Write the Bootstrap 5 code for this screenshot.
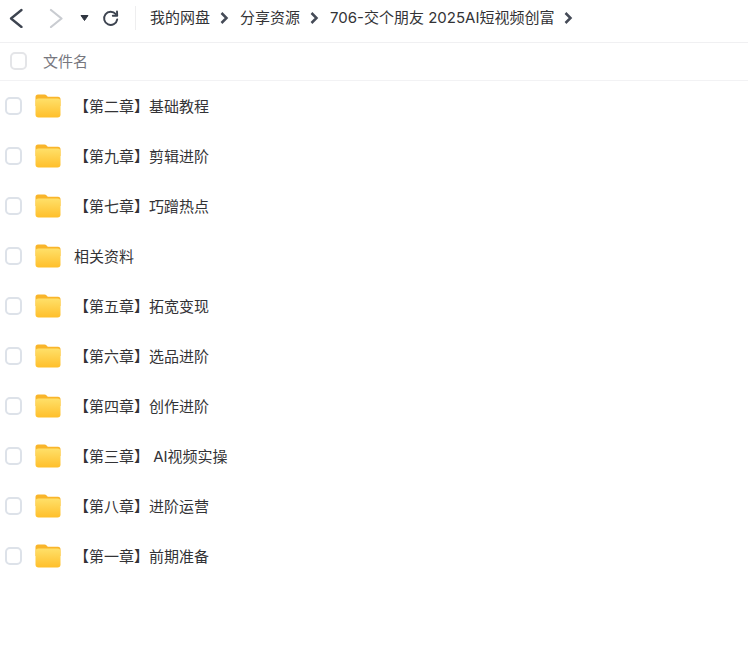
<!DOCTYPE html>
<html lang="zh-CN">
<head>
    <meta charset="UTF-8">
    <title>分享资源</title>
    <link href="https://cdn.jsdelivr.net/npm/bootstrap@5.3.0/dist/css/bootstrap.min.css" rel="stylesheet">
    <style>
        body {
            background: #fff;
            color: #333336;
            font-family: Inter, "Noto Sans CJK SC", sans-serif;
            font-size: 15px;
        }
        .top-bar {
            height: 43px;
            padding-left: 8px;
            padding-bottom: 6px;
            border-bottom: 1px solid #f0f0f2;
        }
        .bar-btn {
            display: block;
            flex: none;
        }
        .btn-forward {
            margin-left: 24px;
        }
        .btn-drop {
            margin-left: 16px;
        }
        .btn-reload {
            margin-left: 13px;
        }
        .bar-sep {
            width: 1px;
            height: 24px;
            flex: none;
            margin: 0 14px 0 16px;
            background: #eeeeef;
        }
        .crumb-text {
            white-space: nowrap;
        }
        .crumb-arrow {
            display: block;
            flex: none;
            margin: 0 11px 0 10px;
        }
        .head-row {
            height: 38px;
            padding-left: 10px;
            border-bottom: 1px solid #f2f2f4;
            color: #77777e;
        }
        .head-row .tick-box {
            border-color: #e4e5e8;
            margin-bottom: 1px;
        }
        .head-row .head-label {
            margin-left: 16px;
            padding-top: 2px;
        }
        .tick-box {
            width: 17px;
            height: 18px;
            flex: none;
            border: 2px solid #dde2e9;
            border-radius: 5px;
            background: #fff;
        }
        .file-row {
            height: 50px;
            padding-left: 5px;
        }
        .folder-pic {
            display: block;
            flex: none;
            margin-left: 13px;
            margin-right: 13px;
            margin-bottom: 1px;
        }
        .file-name {
            white-space: pre;
            padding-top: 2px;
        }
    </style>
</head>
<body>

<div class="top-bar d-flex align-items-center">
    <svg class="bar-btn" width="16" height="20" viewBox="0 0 16 20" fill="none" stroke="#3d4450" stroke-width="2.3" stroke-linecap="round" stroke-linejoin="round">
        <path d="M13.500 2 3 10.500 13.500 19"/>
    </svg>
    <svg class="bar-btn btn-forward" width="16" height="20" viewBox="0 0 16 20" fill="none" stroke="#c9ccd1" stroke-width="2.2" stroke-linecap="round" stroke-linejoin="round">
        <path d="M3 2 13.500 10.500 3 19"/>
    </svg>
    <svg class="bar-btn btn-drop" width="9" height="8" viewBox="0 0 9 8">
        <path d="M1 1.500h7L4.500 6.500z" fill="#2f3540" stroke="#2f3540" stroke-linejoin="round"/>
    </svg>
    <svg class="bar-btn btn-reload" width="17" height="17" viewBox="0 0 17 17" fill="none" stroke="#3d4450" stroke-width="1.900" stroke-linecap="round">
        <path d="M13.800 4.200A6.600 6.600 0 1 0 15.200 9.500"/>
        <path d="M15 1.500 15.200 5.800 10.800 5.800" stroke-linejoin="round"/>
    </svg>
    <div class="bar-sep"></div>
    <span class="crumb-text">我的网盘</span>
    <svg class="crumb-arrow" width="9" height="12" viewBox="0 0 9 12" fill="none" stroke="#454b57" stroke-width="2.500"><path d="M1.500 1 6.500 6l-5 5"/></svg>
    <span class="crumb-text">分享资源</span>
    <svg class="crumb-arrow" width="9" height="12" viewBox="0 0 9 12" fill="none" stroke="#454b57" stroke-width="2.500"><path d="M1.500 1 6.500 6l-5 5"/></svg>
    <span class="crumb-text">706-交个朋友 2025AI短视频创富</span>
    <svg class="crumb-arrow" width="9" height="12" viewBox="0 0 9 12" fill="none" stroke="#454b57" stroke-width="2.500"><path d="M1.500 1 6.500 6l-5 5"/></svg>
</div>

<div class="head-row d-flex align-items-center">
    <div class="tick-box"></div>
    <span class="head-label">文件名</span>
</div>

<div id="fileList"></div>

<svg width="0" height="0" class="d-block">
    <defs>
        <linearGradient id="folderFill" x1="0" y1="0" x2="0" y2="1">
            <stop offset="0" stop-color="#ffe069"/>
            <stop offset="1" stop-color="#ffbf2b"/>
        </linearGradient>
    </defs>
</svg>

<script>
    const names = [
        "【第二章】基础教程",
        "【第九章】剪辑进阶",
        "【第七章】巧蹭热点",
        "相关资料",
        "【第五章】拓宽变现",
        "【第六章】选品进阶",
        "【第四章】创作进阶",
        "【第三章】 AI视频实操",
        "【第八章】进阶运营",
        "【第一章】前期准备"
    ];

    const folder = `<svg class="folder-pic" width="26" height="24" viewBox="0 0 26 24">
        <path d="M.5 3A2.500 2.500 0 0 1 3 .5h6.500c.9 0 1.500.4 2.100 1L12.800 2.700H23A2.500 2.500 0 0 1 25.500 5.200V12H.5z" fill="#f9b52a"/>
        <rect x=".5" y="4.500" width="25" height="19" rx="3" fill="url(#folderFill)"/>
    </svg>`;

    // one row per folder
    document.getElementById("fileList").innerHTML = names.map(name => `
        <div class="file-row d-flex align-items-center">
            <div class="tick-box"></div>
            ${folder}
            <span class="file-name">${name}</span>
        </div>`).join("");
</script>

<script src="https://cdn.jsdelivr.net/npm/bootstrap@5.3.0/dist/js/bootstrap.bundle.min.js"></script>
</body>
</html>
